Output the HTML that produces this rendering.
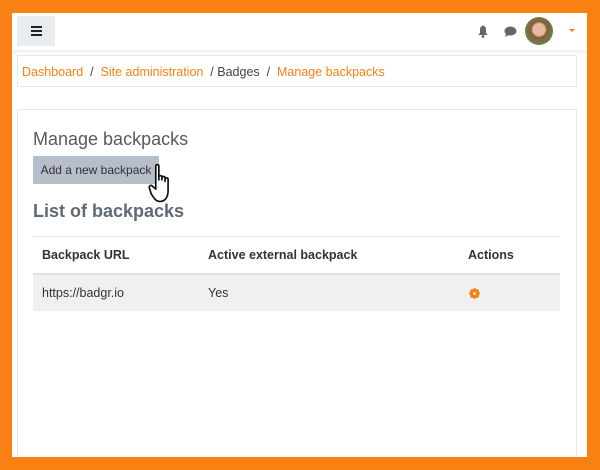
<!DOCTYPE html>
<html><head><style>
body{margin:0;width:600px;height:470px;background:#f98012;position:relative;overflow:hidden;font-family:"Liberation Sans",sans-serif;}
.page{position:absolute;left:12px;top:13px;width:575px;height:444px;background:#fff;overflow:hidden;}
.nav{position:absolute;left:0;top:0;width:575px;height:37px;background:#fff;box-shadow:0 2px 3px rgba(0,0,0,.08);}
.ham{position:absolute;left:5px;top:3px;width:38px;height:30px;background:#e9ecef;}
.ham i{position:absolute;left:14px;width:11px;height:2px;background:#222;}
.bc{position:absolute;left:5px;top:42px;width:560px;height:32px;border:1px solid #e5e7ea;font-size:12.5px;line-height:32px;color:#444;box-sizing:border-box;padding-left:4px;}
.bc a{color:#f98012;}
.card{position:absolute;left:5px;top:96px;width:560px;height:348px;border:1px solid #e5e7ea;border-bottom:none;box-sizing:border-box;}
h2{position:absolute;left:15px;top:19px;margin:0;font-weight:normal;font-size:18px;color:#5a5a5a;}
.btn{position:absolute;left:15px;top:46px;width:126px;height:28px;background:#b5bec9;font-size:12px;line-height:28px;text-align:center;color:#333;}
h3{position:absolute;left:15px;top:91px;margin:0;font-size:18px;color:#5f6a75;}
.t{position:absolute;left:15px;top:126px;width:527px;font-size:12.5px;color:#333;}
.hr{height:36px;border-top:1px solid #e5e7ea;border-bottom:2px solid #dee2e6;position:relative;font-weight:bold;}
.row{height:36px;background:#f0f0f0;position:relative;}
.t span{position:absolute;top:11px;}
</style></head><body>
<div class="page">
 <div class="nav">
  <div class="ham"><i style="top:10px"></i><i style="top:14px"></i><i style="top:18px"></i></div>
  <svg style="position:absolute;left:465px;top:12px" width="12" height="13" viewBox="0 0 12 13"><path d="M6 0.5C4 1 3 2.5 3 4.5V8L1.2 10H10.8L9 8V4.5C9 2.5 8 1 6 0.5Z" fill="#666"/><circle cx="6" cy="11.5" r="1.4" fill="#666"/></svg>
  <svg style="position:absolute;left:492px;top:13px" width="13" height="12" viewBox="0 0 13 12"><ellipse cx="6.5" cy="5" rx="6" ry="4.5" fill="#666"/><path d="M2 8L1 11L5 9Z" fill="#666"/></svg>
  <div style="position:absolute;left:513px;top:4px;width:28px;height:28px;border-radius:50%;background:radial-gradient(circle at 50% 45%,#e8b9a0 0 6px,#8a5a3a 8px,#6f7b4a 13px);"></div>
  <div style="position:absolute;left:557px;top:16px;border-left:3px solid transparent;border-right:3px solid transparent;border-top:3px solid #f98012;"></div>
 </div>
 <div class="bc"><a>Dashboard</a> &nbsp;/&nbsp; <a>Site administration</a> &nbsp;/&nbsp;Badges&nbsp; /&nbsp; <a>Manage backpacks</a></div>
 <div class="card">
  <h2>Manage backpacks</h2>
  <div class="btn">Add a new backpack</div>
  <svg style="position:absolute;left:130px;top:53px" width="34" height="40" viewBox="0 0 22 26"><path d="M5 2C5 0.8 7 0.8 7 2V11V9C7 8 9 8 9 9V11V9.5C9 8.5 11 8.5 11 9.5V12V10.5C11 9.5 13 9.5 13 10.5L13 18C13 22 11 25 8 25C5 25 4 23 2 20L0.8 16C0.5 15 1.8 14 2.8 15L5 17Z" fill="#fff" stroke="#111" stroke-width="1.1" stroke-linejoin="round"/></svg>
  <h3>List of backpacks</h3>
  <div class="t">
   <div class="hr"><span style="left:9px">Backpack URL</span><span style="left:175px">Active external backpack</span><span style="left:435px">Actions</span></div>
   <div class="row"><span style="left:9px">https://badgr.io</span><span style="left:175px">Yes</span>
    <svg style="position:absolute;left:436px;top:13px" width="11" height="11" viewBox="0 0 11 11"><circle cx="5.5" cy="5.5" r="3.6" fill="none" stroke="#f98012" stroke-width="2.4"/><path d="M5.5 0V11M0 5.5H11M1.6 1.6L9.4 9.4M9.4 1.6L1.6 9.4" stroke="#f98012" stroke-width="1.8"/><circle cx="5.5" cy="5.5" r="1.4" fill="#f0f0f0"/></svg>
   </div>
  </div>
 </div>
</div>
</body></html>
